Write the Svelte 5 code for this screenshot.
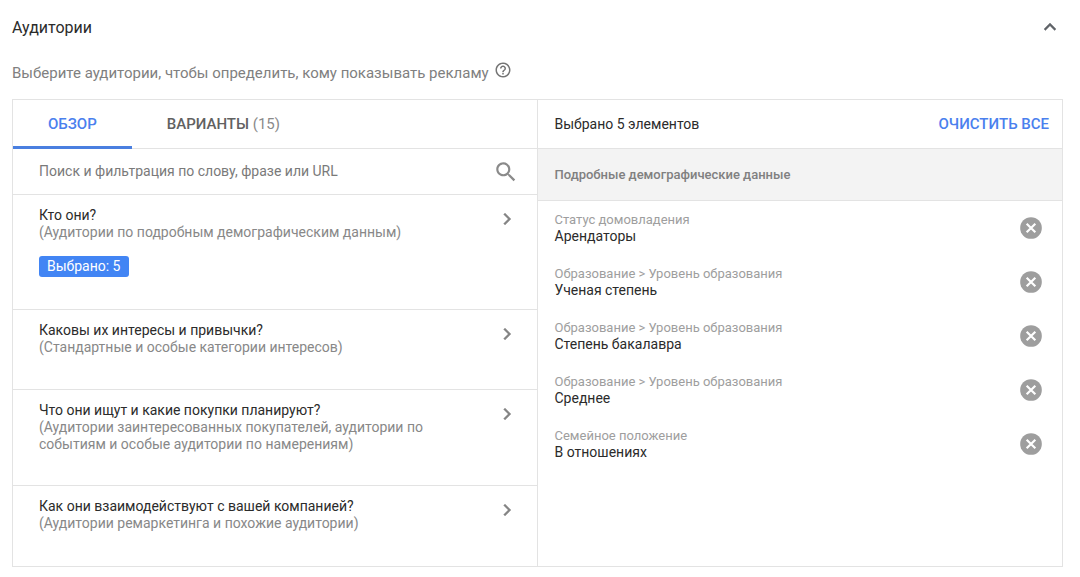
<script>
  let activeTab = "overview";
  let expanded = true;
  let query = "";

  const groups = [
    {
      title: "Кто они?",
      description: "(Аудитории по подробным демографическим данным)",
      badge: true,
    },
    {
      title: "Каковы их интересы и привычки?",
      description: "(Стандартные и особые категории интересов)",
    },
    {
      title: "Что они ищут и какие покупки планируют?",
      description:
        "(Аудитории заинтересованных покупателей, аудитории по событиям и особые аудитории по намерениям)",
    },
    {
      title: "Как они взаимодействуют с вашей компанией?",
      description: "(Аудитории ремаркетинга и похожие аудитории)",
    },
  ];

  let selected = [
    { id: 1, path: "Статус домовладения", name: "Арендаторы" },
    { id: 2, path: "Образование > Уровень образования", name: "Ученая степень" },
    { id: 3, path: "Образование > Уровень образования", name: "Степень бакалавра" },
    { id: 4, path: "Образование > Уровень образования", name: "Среднее" },
    { id: 5, path: "Семейное положение", name: "В отношениях" },
  ];

  const removeItem = (id) => {
    selected = selected.filter((item) => item.id !== id);
  };

  const clearAll = () => {
    selected = [];
  };
</script>

<section class="audiences">
  <header class="section-header">
    <h2>Аудитории</h2>
    <button
      class="icon-button"
      aria-label="Свернуть"
      aria-expanded={expanded}
      on:click={() => (expanded = !expanded)}
    >
      <svg class:flipped={!expanded} width="24" height="24" viewBox="0 0 24 24" fill="#5f6368">
        <path d="M12 8l-6 6 1.41 1.41L12 10.83l4.59 4.58L18 14z" stroke="#5f6368" stroke-width="0.4" />
      </svg>
    </button>
  </header>

  {#if expanded}
    <div class="hint">
      <p>Выберите аудитории, чтобы определить, кому показывать рекламу</p>
      <button class="icon-button" aria-label="Справка">
        <svg width="18" height="18" viewBox="0 0 24 24" fill="#757575">
          <path d="M11 18h2v-2h-2v2zm1-16C6.48 2 2 6.48 2 12s4.48 10 10 10 10-4.48 10-10S17.52 2 12 2zm0 18c-4.41 0-8-3.59-8-8s3.59-8 8-8 8 3.59 8 8-3.59 8-8 8zm0-14c-2.21 0-4 1.79-4 4h2c0-1.1.9-2 2-2s2 .9 2 2c0 2-3 1.75-3 5h2c0-2.25 3-2.5 3-5 0-2.21-1.79-4-4-4z" />
        </svg>
      </button>
    </div>

    <div class="picker">
      <div class="browse">
        <div class="tabs" role="tablist">
          <button
            class="tab"
            class:active={activeTab === "overview"}
            role="tab"
            aria-selected={activeTab === "overview"}
            on:click={() => (activeTab = "overview")}
          >
            ОБЗОР
          </button>
          <button
            class="tab"
            class:active={activeTab === "ideas"}
            role="tab"
            aria-selected={activeTab === "ideas"}
            on:click={() => (activeTab = "ideas")}
          >
            ВАРИАНТЫ <span class="count">(15)</span>
          </button>
        </div>

        <label class="search">
          <input
            type="text"
            bind:value={query}
            placeholder="Поиск и фильтрация по слову, фразе или URL"
            aria-label="Поиск и фильтрация по слову, фразе или URL"
          />
          <svg width="26" height="26" viewBox="0 0 24 24" fill="#8a8a8a">
            <path d="M15.5 14h-.79l-.28-.27C15.41 12.59 16 11.11 16 9.5 16 5.91 13.09 3 9.5 3S3 5.91 3 9.5 5.91 16 9.5 16c1.61 0 3.09-.59 4.23-1.57l.27.28v.79l5 4.99L20.49 19l-4.99-5zm-6 0C7.01 14 5 11.99 5 9.5S7.01 5 9.5 5 14 7.01 14 9.5 11.99 14 9.5 14z" />
          </svg>
        </label>

        {#each groups as group}
          <button class="group">
            <span class="group-text">
              <span class="group-title">{group.title}</span>
              <span class="group-description">{group.description}</span>
              {#if group.badge && selected.length}
                <span class="badge">Выбрано: {selected.length}</span>
              {/if}
            </span>
            <svg width="24" height="24" viewBox="0 0 24 24" fill="#858585">
              <path d="M10 6L8.59 7.41 13.17 12l-4.58 4.59L10 18l6-6z" stroke="#858585" stroke-width="0.3" />
            </svg>
          </button>
        {/each}
      </div>

      <div class="selection">
        <div class="selection-header">
          <span>Выбрано {selected.length} элементов</span>
          <button class="clear" on:click={clearAll}>ОЧИСТИТЬ ВСЕ</button>
        </div>
        <h3>Подробные демографические данные</h3>
        <ul>
          {#each selected as item (item.id)}
            <li>
              <div>
                <div class="item-path">{item.path}</div>
                <div class="item-name">{item.name}</div>
              </div>
              <button
                class="icon-button"
                aria-label="Удалить: {item.name}"
                on:click={() => removeItem(item.id)}
              >
                <svg width="26" height="26" viewBox="0 0 24 24">
                  <circle cx="12" cy="12" r="10" fill="#9e9e9e" />
                  <path d="M8 8l8 8M16 8l-8 8" stroke="#fff" stroke-width="2" />
                </svg>
              </button>
            </li>
          {/each}
        </ul>
      </div>
    </div>
  {/if}
</section>

<style>
  :global(body) {
    margin: 0;
    background: #fff;
  }

  .audiences {
    padding: 12px 17px 10px 12px;
    font-family: Roboto, "Liberation Sans", sans-serif;
    font-size: 14px;
    line-height: 17px;
    color: #2b2b2b;
  }

  button {
    margin: 0;
    padding: 0;
    border: none;
    background: none;
    color: inherit;
    font: inherit;
    cursor: pointer;
  }

  svg {
    display: block;
    flex: none;
  }

  .flipped {
    transform: rotate(180deg);
  }

  .section-header {
    display: flex;
    align-items: center;
    justify-content: space-between;
    height: 30px;
    padding-right: 1px;
  }

  h2 {
    margin: 0;
    font-size: 16px;
    font-weight: 400;
  }

  .hint {
    display: flex;
    align-items: flex-start;
    gap: 5px;
    padding: 19px 0 15px;
    font-size: 15px;
    line-height: 21px;
    color: #808080;
  }

  .hint p {
    margin: 0;
    padding-top: 2px;
  }

  .picker {
    display: grid;
    grid-template-columns: 1fr 1fr;
    border: 1px solid #e3e3e3;
  }

  .browse {
    border-right: 1px solid #e3e3e3;
  }

  .tabs {
    display: flex;
    height: 49px;
    border-bottom: 1px solid #e3e3e3;
    box-sizing: border-box;
  }

  .tab {
    height: 49px;
    padding: 3px 35px 0;
    border-bottom: 3px solid transparent;
    box-sizing: border-box;
    font-size: 15px;
    font-weight: 500;
    color: #616161;
  }

  .tab.active {
    border-bottom-color: #4a7fe0;
    color: #4a80ee;
  }

  .count {
    font-weight: 400;
    color: #8a8a8a;
  }

  .search {
    display: flex;
    align-items: center;
    height: 46px;
    padding: 0 18px 0 26px;
    border-bottom: 1px solid #e3e3e3;
    box-sizing: border-box;
  }

  input {
    flex: 1;
    min-width: 0;
    padding: 0;
    border: none;
    outline: none;
    background: none;
    font: inherit;
    color: #2b2b2b;
  }

  input::placeholder {
    color: #7a7a7a;
    opacity: 1;
  }

  .group {
    display: flex;
    align-items: flex-start;
    justify-content: space-between;
    width: 100%;
    min-height: 80px;
    padding: 12px 18px 32px 26px;
    border-bottom: 1px solid #e3e3e3;
    box-sizing: border-box;
    text-align: left;
  }

  .group:last-child {
    border-bottom: none;
  }

  .group-text {
    display: flex;
    flex-direction: column;
    align-items: flex-start;
    max-width: 400px;
  }

  .group-description {
    color: #888;
  }

  .badge {
    margin-top: 15px;
    padding: 2px 8px;
    border-radius: 3px;
    background: #4285f4;
    color: #fff;
  }

  .selection-header {
    display: flex;
    align-items: center;
    justify-content: space-between;
    height: 49px;
    padding: 0 13px 0 17px;
    border-bottom: 1px solid #e3e3e3;
    box-sizing: border-box;
  }

  .clear {
    font-size: 15px;
    font-weight: 500;
    color: #4a80ee;
  }

  h3 {
    margin: 0;
    padding: 17px;
    border-bottom: 1px solid #e3e3e3;
    background: #f3f3f3;
    font-size: 13px;
    font-weight: 500;
    color: #808080;
  }

  ul {
    margin: 0;
    padding: 10px 18px 0 17px;
    list-style: none;
  }

  li {
    display: flex;
    align-items: flex-start;
    justify-content: space-between;
    height: 54px;
  }

  li .icon-button {
    margin-top: 4px;
  }

  .item-path {
    font-size: 13px;
    color: #9e9e9e;
  }
</style>
